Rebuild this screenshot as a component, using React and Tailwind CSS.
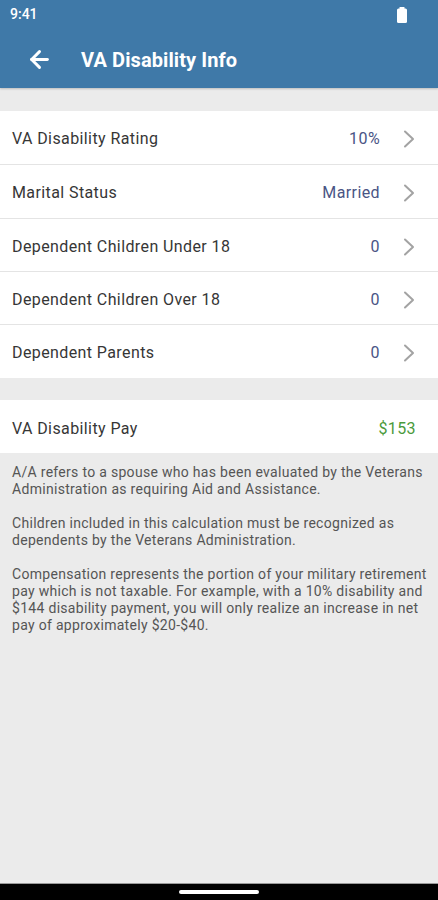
import React from "react";
import { ArrowLeft } from "lucide-react";

const rows = [
  { label: "VA Disability Rating", value: "10%", h: "h-[54px]" },
  { label: "Marital Status", value: "Married", h: "h-[54px]" },
  { label: "Dependent Children Under 18", value: "0", h: "h-[53px]" },
  { label: "Dependent Children Over 18", value: "0", h: "h-[53px]" },
  { label: "Dependent Parents", value: "0", h: "h-[53px]" },
];

const notes = [
  [
    "A/A refers to a spouse who has been evaluated by the Veterans",
    "Administration as requiring Aid and Assistance.",
  ],
  [
    "Children included in this calculation must be recognized as",
    "dependents by the Veterans Administration.",
  ],
  [
    "Compensation represents the portion of your military retirement",
    "pay which is not taxable. For example, with a 10% disability and",
    "$144 disability payment, you will only realize an increase in net",
    "pay of approximately $20-$40.",
  ],
];

const Chevron = () => (
  <svg width="12" height="18" viewBox="0 0 12 18" className="ml-[23px]">
    <polyline
      points="2,1.5 10,9 2,16.5"
      fill="none"
      stroke="#a3a3a3"
      strokeWidth="2"
      strokeLinecap="round"
      strokeLinejoin="round"
    />
  </svg>
);

const App = () => {
  return (
    <div
      className="w-[438px] h-[900px] flex flex-col bg-[#ebebeb] overflow-hidden tracking-[0.4px]"
      style={{ fontFamily: "Roboto, 'Liberation Sans', sans-serif" }}
    >
      {/* Header */}
      <div className="h-[88px] bg-[#3f79a8] flex flex-col shadow-[0_1px_2px_rgba(0,0,0,0.2)]">
        <div className="h-[28px] flex items-center justify-between pl-[10px] pr-[30px] pt-[1px]">
          <span className="text-white text-[14px] font-medium tracking-normal">9:41</span>
          <svg width="12" height="16" viewBox="0 0 12 16">
            <rect x="3.5" y="0" width="5" height="2" rx="0.5" fill="#fff" />
            <rect x="1" y="1.5" width="10" height="14.5" rx="1.5" fill="#fff" />
          </svg>
        </div>
        <div className="flex-1 flex items-center pl-[26px] pt-[3px]">
          <ArrowLeft size={27} color="#ffffff" strokeWidth={2.6} />
          <span className="ml-[28px] text-white text-[20px] font-bold tracking-[0.1px]">
            VA Disability Info
          </span>
        </div>
      </div>

      {/* Settings rows */}
      <div className="mt-[23px] bg-white">
        {rows.map((row, i) => (
          <div
            key={row.label}
            className={`${row.h} flex items-center pl-[12px] pr-[23px] pt-[3px] ${
              i < rows.length - 1 ? "border-b border-[#e4e4e4]" : ""
            }`}
          >
            <span className="flex-1 text-[16px] text-[#363636]">{row.label}</span>
            <span className="text-[16px] text-[#4a5585]">{row.value}</span>
            <Chevron />
          </div>
        ))}
      </div>

      {/* Pay */}
      <div className="mt-[22px] bg-white h-[53px] flex items-center pl-[12px] pr-[22px] pt-[4px]">
        <span className="flex-1 text-[16px] text-[#363636]">VA Disability Pay</span>
        <span className="text-[16px] text-[#4b9a3c]">$153</span>
      </div>

      {/* Notes */}
      <div className="pl-[12px] pt-[11px] text-[14px] leading-[17px] text-[#555555] tracking-[0.3px] flex flex-col gap-[17px]">
        {notes.map((lines, i) => (
          <p key={i}>
            {lines.map((line) => (
              <span key={line} className="block whitespace-nowrap">
                {line}
              </span>
            ))}
          </p>
        ))}
      </div>

      <div className="flex-1" />

      {/* Nav bar */}
      <div className="h-[17px] bg-black flex items-center justify-center border-t border-[#9a9a9a]">
        <div className="w-[80px] h-[4px] rounded-full bg-white" />
      </div>
    </div>
  );
};

export default App;
